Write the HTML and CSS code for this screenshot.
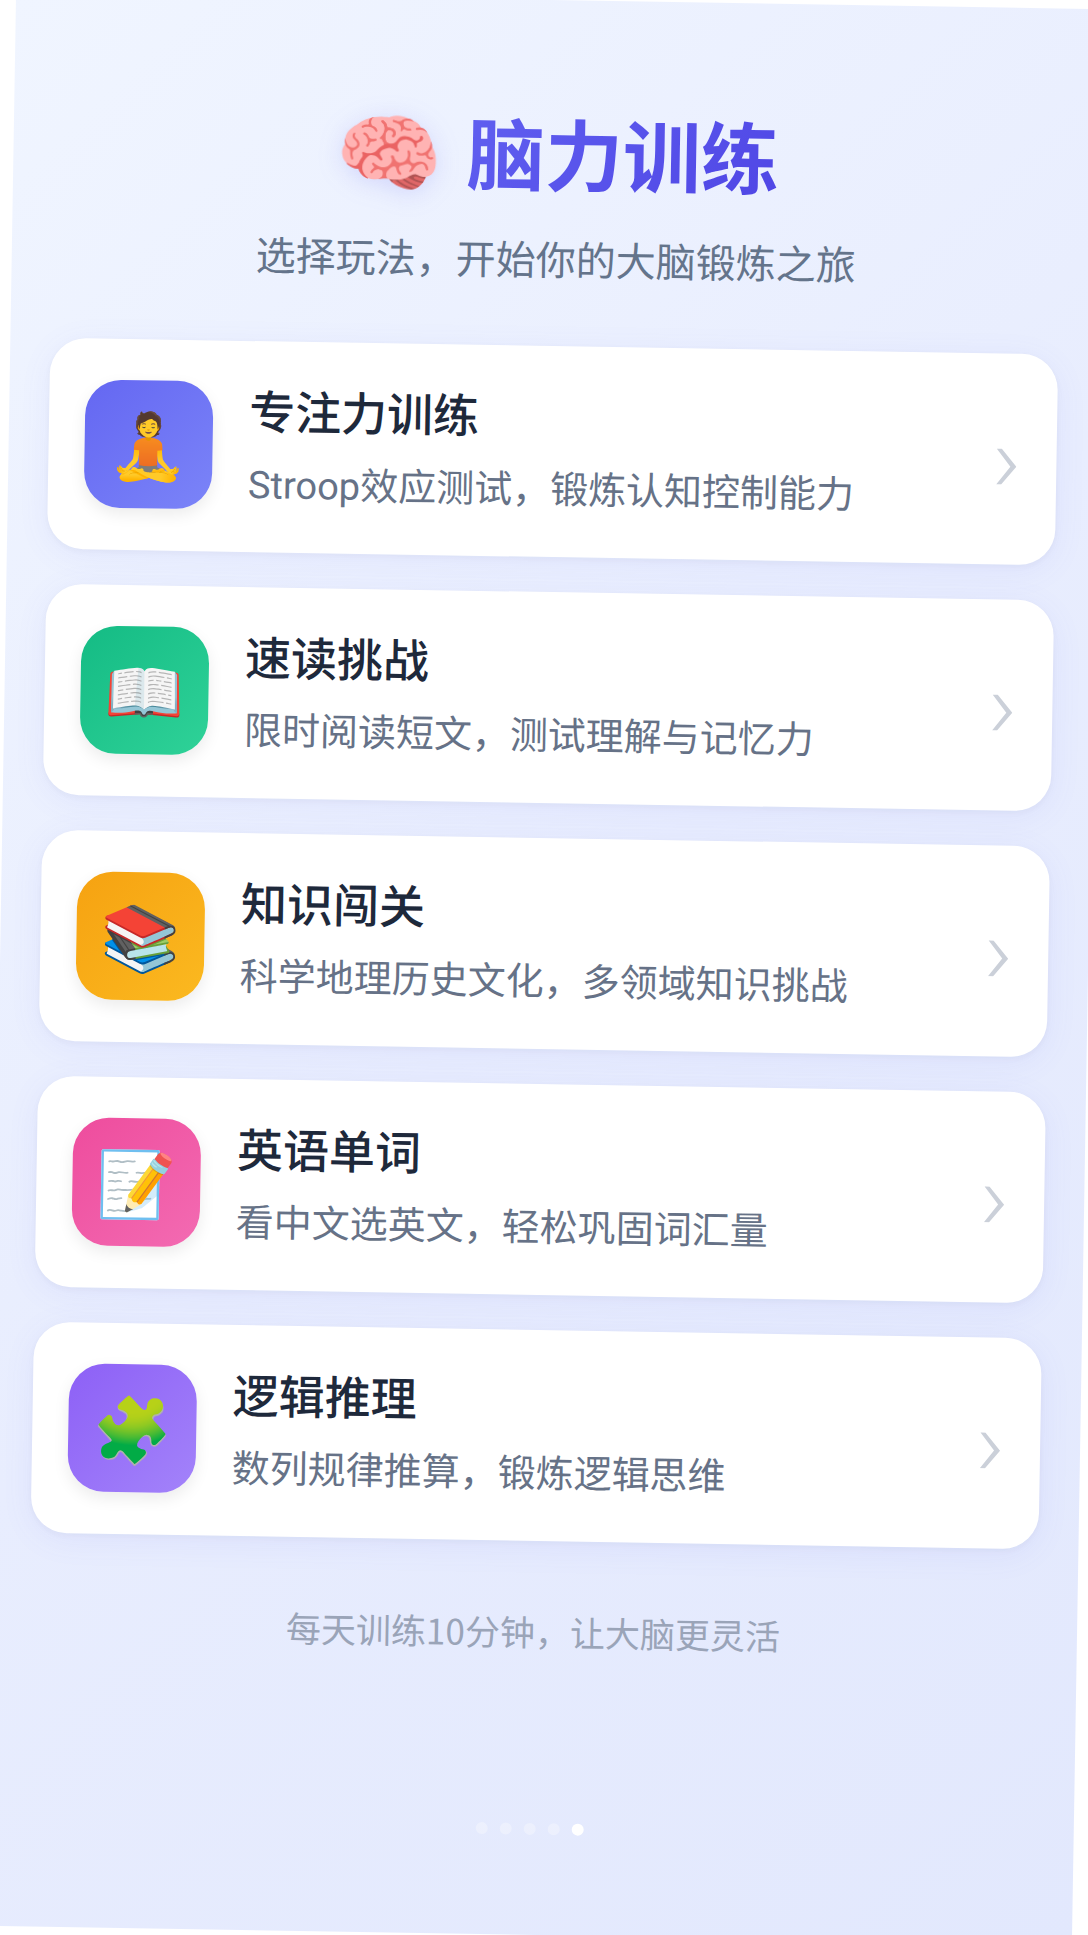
FILE: index.html
```html
<!DOCTYPE html>
<html lang="zh-CN">
<head>
  <meta charset="utf-8">
  <meta name="viewport" content="width=device-width, initial-scale=1">
  <title>脑力训练</title>
  <link rel="stylesheet" href="styles.css">
</head>
<body>
  <div class="screen">
    <header class="header">
      <h1 class="title">
        <span class="title-emoji" aria-hidden="true">🧠</span>
        <span class="title-text">脑力训练</span>
      </h1>
      <p class="subtitle">选择玩法，开始你的大脑锻炼之旅</p>
    </header>

    <main class="cards">
      <a class="card" href="#focus">
        <span class="tile tile-indigo" aria-hidden="true">🧘</span>
        <span class="card-body">
          <span class="card-title">专注力训练</span>
          <span class="card-desc">Stroop效应测试，锻炼认知控制能力</span>
        </span>
        <svg class="chevron" viewBox="0 0 20 36" aria-hidden="true"><path d="M0 0h5l15 18L5 36H0l14-18z"/></svg>
      </a>
      <a class="card" href="#reading">
        <span class="tile tile-green" aria-hidden="true">📖</span>
        <span class="card-body">
          <span class="card-title">速读挑战</span>
          <span class="card-desc">限时阅读短文，测试理解与记忆力</span>
        </span>
        <svg class="chevron" viewBox="0 0 20 36" aria-hidden="true"><path d="M0 0h5l15 18L5 36H0l14-18z"/></svg>
      </a>
      <a class="card" href="#knowledge">
        <span class="tile tile-amber" aria-hidden="true">📚</span>
        <span class="card-body">
          <span class="card-title">知识闯关</span>
          <span class="card-desc">科学地理历史文化，多领域知识挑战</span>
        </span>
        <svg class="chevron" viewBox="0 0 20 36" aria-hidden="true"><path d="M0 0h5l15 18L5 36H0l14-18z"/></svg>
      </a>
      <a class="card" href="#words">
        <span class="tile tile-pink" aria-hidden="true">📝</span>
        <span class="card-body">
          <span class="card-title">英语单词</span>
          <span class="card-desc">看中文选英文，轻松巩固词汇量</span>
        </span>
        <svg class="chevron" viewBox="0 0 20 36" aria-hidden="true"><path d="M0 0h5l15 18L5 36H0l14-18z"/></svg>
      </a>
      <a class="card" href="#logic">
        <span class="tile tile-violet" aria-hidden="true">🧩</span>
        <span class="card-body">
          <span class="card-title">逻辑推理</span>
          <span class="card-desc">数列规律推算，锻炼逻辑思维</span>
        </span>
        <svg class="chevron" viewBox="0 0 20 36" aria-hidden="true"><path d="M0 0h5l15 18L5 36H0l14-18z"/></svg>
      </a>
    </main>

    <footer class="footer">
      <p class="tip">每天训练10分钟，让大脑更灵活</p>
      <div class="dots" aria-hidden="true">
        <span class="dot"></span>
        <span class="dot"></span>
        <span class="dot"></span>
        <span class="dot"></span>
        <span class="dot dot-active"></span>
      </div>
    </footer>
  </div>
</body>
</html>
```
FILE: styles.css
```css
* {
  box-sizing: border-box;
}

html {
  background: #ffffff;
}

body {
  margin: 0;
  overflow: hidden;
  font-family: "Noto Sans CJK SC", sans-serif;
  color: #1e293b;
}

h1,
p {
  margin: 0;
}

/* The whole screen is tilted slightly clockwise */
.screen {
  display: flex;
  flex-direction: column;
  min-height: 100vh;
  padding: 106px 40px 100px;
  background: linear-gradient(135deg, #f0f5ff 0%, #e8edfe 50%, #e2e8fd 100%);
  transform: rotate(0.95deg);
}

.header {
  display: flex;
  flex-direction: column;
  align-items: center;
  gap: 26px;
  text-align: center;
}

.title {
  display: flex;
  align-items: center;
  justify-content: center;
  gap: 24px;
  font-size: 78px;
  line-height: 90px;
  font-weight: 700;
}

.title-emoji {
  padding-top: 6px;
  font-family: "Noto Color Emoji", sans-serif;
  font-size: 86px;
  font-weight: 400;
  filter: drop-shadow(0 4px 12px rgba(99, 102, 241, 0.2));
}

.title-text {
  padding-bottom: 6px;
  background: linear-gradient(135deg, #605ff0, #4f46e5);
  background-clip: text;
  -webkit-background-clip: text;
  color: transparent;
}

.subtitle {
  font-size: 40px;
  line-height: 60px;
  color: #64748b;
}

.cards {
  display: flex;
  flex-direction: column;
  gap: 35px;
  margin-top: 58px;
}

.card {
  display: flex;
  align-items: center;
  gap: 36px;
  padding: 36px 40px 37px 36px;
  border-radius: 36px;
  background: #ffffff;
  box-shadow: 0 6px 32px rgba(99, 102, 241, 0.08), 0 2px 6px rgba(30, 41, 59, 0.04);
  color: inherit;
  text-decoration: none;
}

.tile {
  display: flex;
  flex: none;
  align-items: center;
  justify-content: center;
  width: 128px;
  height: 128px;
  padding-top: 8px;
  border-radius: 36px;
  box-shadow: 0 6px 16px rgba(0, 0, 0, 0.08);
  font-family: "Noto Color Emoji", sans-serif;
  font-size: 64px;
  line-height: 76px;
}

.tile-indigo {
  background: linear-gradient(135deg, #6467f2, #7b84f8);
}

.tile-green {
  background: linear-gradient(135deg, #14bb84, #2fd298);
}

.tile-amber {
  background: linear-gradient(135deg, #f6a211, #fbb920);
}

.tile-pink {
  background: linear-gradient(135deg, #ee4c9d, #f36bb2);
}

.tile-violet {
  background: linear-gradient(135deg, #8d60f6, #a383fa);
}

.card-body {
  display: flex;
  flex: 1;
  flex-direction: column;
  gap: 16px;
  min-width: 0;
  padding-bottom: 2px;
}

.card-title {
  font-size: 46px;
  line-height: 64px;
  font-weight: 500;
}

.card-desc {
  font-family: Roboto, "Noto Sans CJK SC", sans-serif;
  font-size: 38px;
  line-height: 56px;
  color: #667287;
}

.chevron {
  flex: none;
  width: 20px;
  height: 36px;
  margin-top: 16px;
  fill: #cbd0d9;
}

.footer {
  display: flex;
  flex: 1;
  flex-direction: column;
  align-items: center;
  justify-content: space-between;
  padding-top: 66px;
}

.tip {
  font-size: 35px;
  line-height: 48px;
  color: #9aa4b8;
}

.dots {
  display: flex;
  gap: 12px;
}

.dot {
  width: 12px;
  height: 12px;
  border-radius: 50%;
  background: rgba(255, 255, 255, 0.3);
}

.dot-active {
  background: #ffffff;
}
```
